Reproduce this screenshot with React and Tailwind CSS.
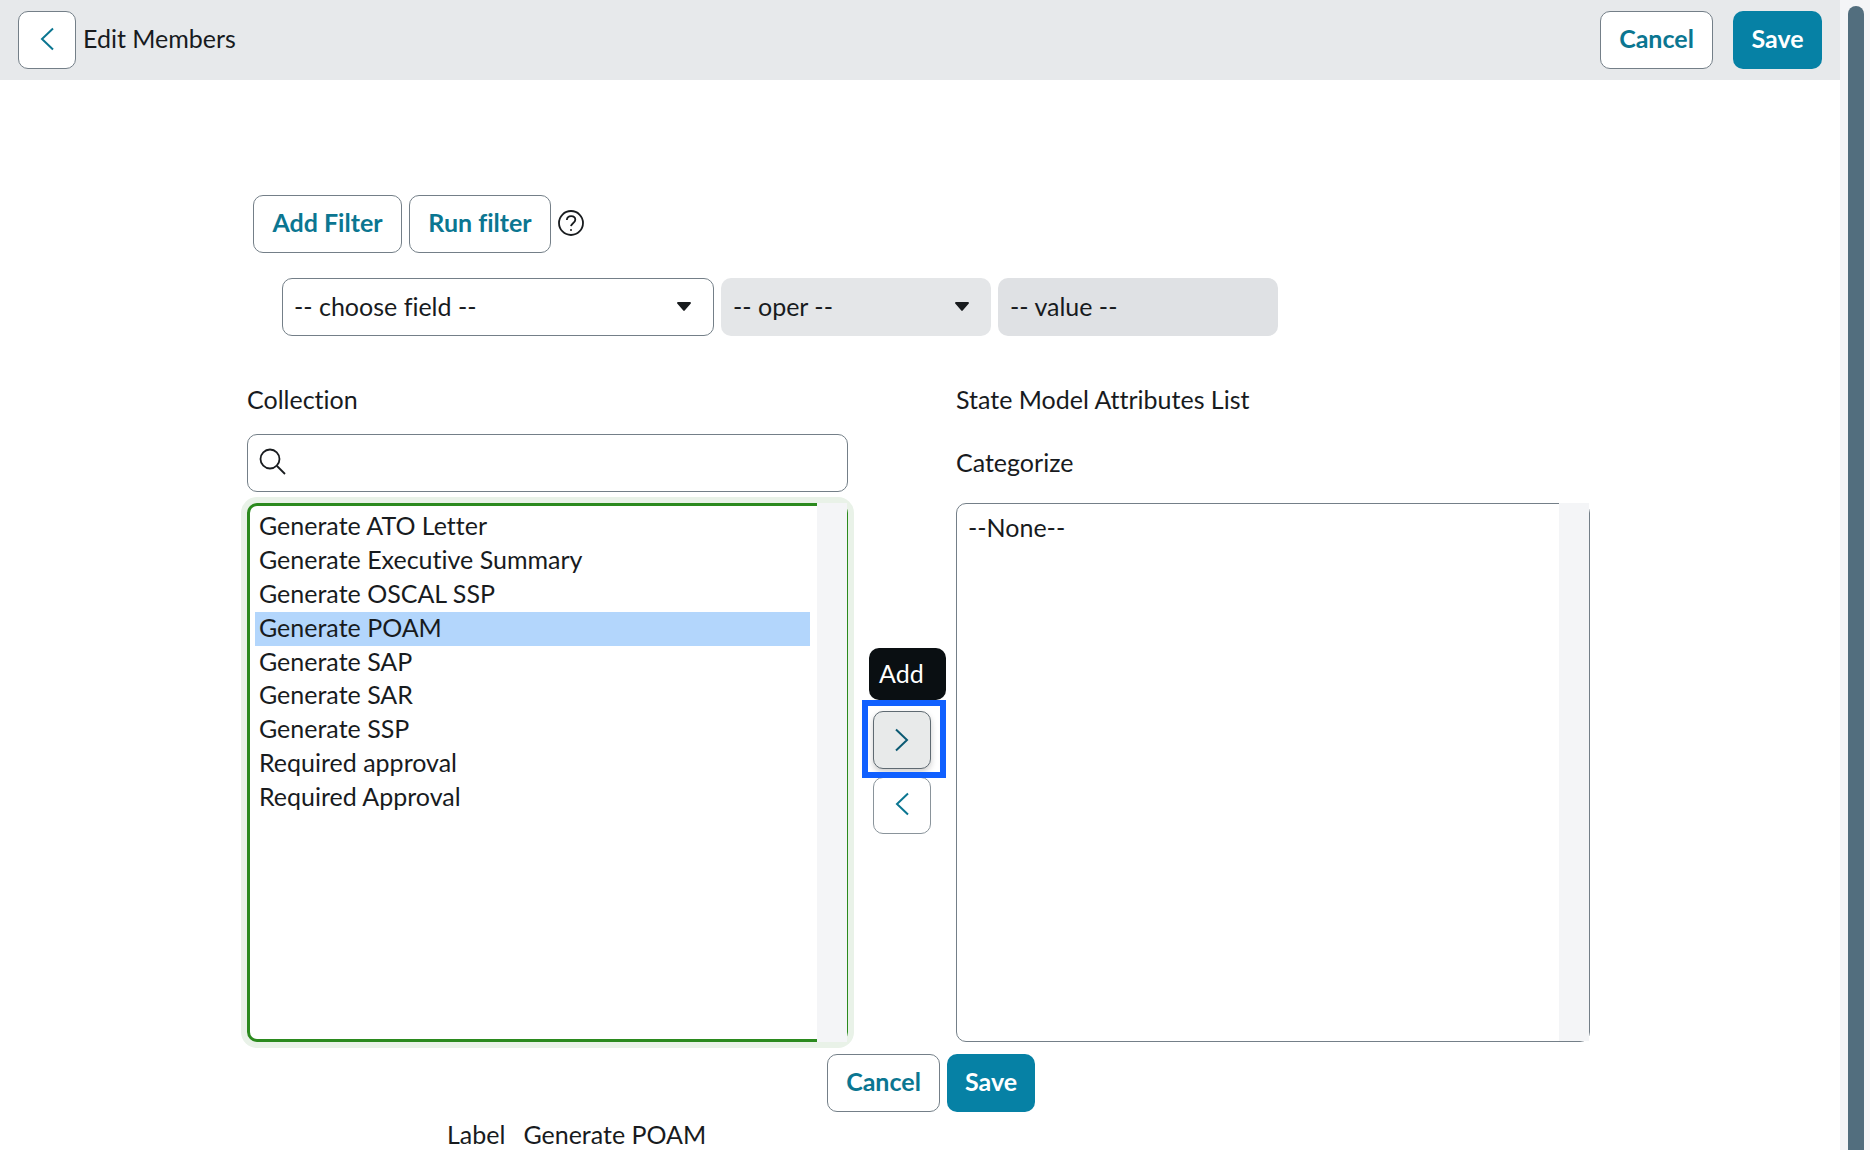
const items = [
  "Generate ATO Letter",
  "Generate Executive Summary",
  "Generate OSCAL SSP",
  "Generate POAM",
  "Generate SAP",
  "Generate SAR",
  "Generate SSP",
  "Required approval",
  "Required Approval",
];

function Chevron({ dir = "left", className = "stroke-[#0b7691]" }) {
  return (
    <svg width="14" height="24" viewBox="0 0 14 24" fill="none" className={className} strokeWidth="2">
      {dir === "left" ? <path d="M13 1.5 2 12l11 10.5" /> : <path d="M1 1.5 12 12 1 22.5" />}
    </svg>
  );
}

function Caret() {
  return (
    <svg width="14" height="9" viewBox="0 0 14 9" className="fill-[#181b1e]">
      <path d="M1 0h12c.8 0 1.2.8.8 1.4L7.7 8.6c-.4.5-1 .5-1.4 0L.2 1.4C-.2.8.2 0 1 0z" />
    </svg>
  );
}

function OutlineButton({ children, className = "" }) {
  return (
    <button className={"h-[58px] rounded-[10px] border border-[#747f88] bg-white pb-[2px] text-[25px] font-bold text-[#0b7691] " + className}>
      {children}
    </button>
  );
}

function SaveButton({ className = "" }) {
  return <button className={"h-[58px] rounded-[10px] bg-[#0681a5] pb-[2px] text-[25px] font-bold text-white " + className}>Save</button>;
}

export default function App() {
  return (
    <div className="flex h-screen overflow-hidden bg-white font-['Lato',sans-serif] text-[25px] text-[#181b1e] [font-variant-ligatures:none]">
      <div className="w-[1840px] shrink-0">
        <div className="flex h-[80px] items-center bg-[#e7e9eb] pl-[18px]">
          <button className="flex h-[58px] w-[58px] items-center justify-center rounded-[10px] border border-[#747f88] bg-white pb-[2px]">
            <Chevron />
          </button>
          <span className="mb-[2px] ml-[7px]">Edit Members</span>
          <div className="ml-auto flex gap-[20px] pr-[18px]">
            <OutlineButton className="w-[113px]">Cancel</OutlineButton>
            <SaveButton className="w-[89px]" />
          </div>
        </div>

        <div className="ml-[253px] mt-[115px] flex items-center gap-[7px]">
          <OutlineButton className="w-[149px]">Add Filter</OutlineButton>
          <OutlineButton className="w-[142px]">Run filter</OutlineButton>
          <svg width="28" height="28" viewBox="0 0 28 28" fill="none" stroke="#181b1e" strokeWidth="1.8" className="mb-[3px] ml-[-1px]">
            <circle cx="14" cy="14" r="12" />
            <path d="M9.8 11c.3-2.4 2-3.8 4.3-3.8 2.4 0 4.2 1.5 4.2 3.6 0 3-3.9 3.2-4.3 6.4" />
            <circle cx="14" cy="21" r="1" fill="#181b1e" stroke="none" />
          </svg>
        </div>

        <div className="ml-[282px] mt-[25px] flex gap-[7px]">
          <div className="flex h-[58px] w-[432px] items-center justify-between rounded-[10px] border border-[#747f88] pb-[1px] pl-[11px] pr-[22px]">
            <span>-- choose field --</span>
            <Caret />
          </div>
          <div className="flex h-[58px] w-[270px] items-center justify-between rounded-[10px] bg-[#e4e6e8] pb-[1px] pl-[12px] pr-[22px]">
            <span>-- oper --</span>
            <Caret />
          </div>
          <div className="flex h-[58px] w-[280px] items-center rounded-[10px] bg-[#dfe1e4] pb-[1px] pl-[12px]">-- value --</div>
        </div>

        <div className="ml-[247px] mt-[46px] flex items-start">
          <div className="w-[601px]">
            <div className="h-[34px] leading-[34px]">Collection</div>
            <div className="mt-[18px] flex h-[58px] items-center rounded-[10px] border border-[#747f88] pb-[5px] pl-[10px]">
              <svg width="28" height="28" viewBox="0 0 28 28" fill="none" stroke="#181b1e" strokeWidth="1.8">
                <circle cx="12" cy="12" r="9.5" />
                <path d="m19 19 8 8" />
              </svg>
            </div>
            <div className="relative mt-[11px] h-[539px] rounded-[10px] border-b-[3px] border-l-[3px] border-r border-t-[3px] border-[#2b8a1e] pl-[5px] pt-[4px] shadow-[0_0_0_6px_#e9f2e8]">
              {items.map((name, i) => (
                <div
                  key={name}
                  className={"h-[33.9px] w-[555px] pl-[4px] leading-[31px] " + (i === 3 ? "bg-[#b3d6fc]" : "")}
                >
                  {name}
                </div>
              ))}
              <div className="absolute -bottom-[3px] right-0 -top-[3px] w-[30px] bg-[#f4f5f7]" />
            </div>
          </div>

          <div className="flex w-[108px] flex-col items-center gap-[8px] pt-[329px]">
            <div className="relative">
              <div className="absolute bottom-[69px] left-[-4px] flex h-[52px] w-[77px] items-center rounded-[10px] bg-[#0a0f12] pl-[10px] text-white">
                Add
              </div>
              <button className="flex h-[58px] w-[58px] items-center justify-center rounded-[10px] border border-[#5f6a72] bg-[#e8eaea] pb-[1px] shadow-[0_3px_6px_rgba(0,0,0,0.2)]">
                <Chevron dir="right" className="stroke-[#0b5a73]" />
              </button>
              <div className="absolute bottom-[-9px] left-[-11px] right-[-15px] top-[-11px] border-[6px] border-[#1060ff]" />
            </div>
            <button className="flex h-[57px] w-[58px] items-center justify-center rounded-[10px] border border-[#8a949b] bg-white pb-[3px]">
              <Chevron />
            </button>
          </div>

          <div className="w-[634px]">
            <div className="h-[34px] leading-[34px]">State Model Attributes List</div>
            <div className="mt-[29px] h-[34px] leading-[34px]">Categorize</div>
            <div className="relative mt-[24px] h-[539px] rounded-[10px] border border-[#747f88] pl-[11px] pt-[6px]">
              <div className="leading-[34px]">--None--</div>
              <div className="absolute -top-px bottom-0 right-0 w-[30px] bg-[#f4f5f7]" />
            </div>
          </div>
        </div>

        <div className="ml-[827px] mt-[12px] flex gap-[7px]">
          <OutlineButton className="w-[113px]">Cancel</OutlineButton>
          <SaveButton className="w-[88px]" />
        </div>

        <div className="ml-[447px] mt-[5px] flex gap-[18px] leading-[34px]">
          <span>Label</span>
          <span>Generate POAM</span>
        </div>
      </div>

      <div className="flex-1 bg-[#f4f5f7] pl-[8px] pt-[6px]">
        <div className="min-h-full w-[16px] rounded-t-[8px] bg-[#526e7e]" />
      </div>
    </div>
  );
}
